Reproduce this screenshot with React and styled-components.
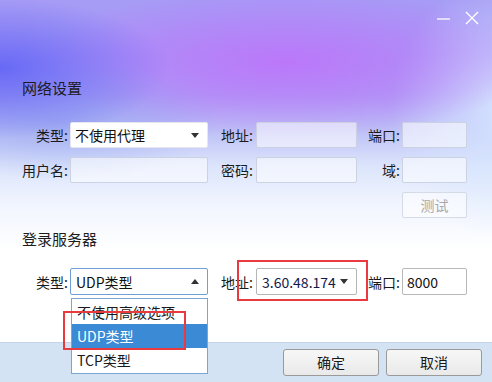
import React from "react";
import styled, { createGlobalStyle } from "styled-components";

const GlobalStyle = createGlobalStyle`
  html, body {
    margin: 0;
    padding: 0;
    background: #ffffff;
  }
  body {
    font-family: "Noto Sans CJK SC", "Noto Sans", sans-serif;
  }
`;

const Window = styled.div`
  position: relative;
  width: 492px;
  height: 382px;
  overflow: hidden;
  display: flex;
  flex-direction: column;
  color: #1a1a1a;
  font-size: 14px;
  background:
    radial-gradient(ellipse 170px 70px at 0px 68px, rgba(96, 100, 246, 0.9), rgba(96, 100, 246, 0)),
    radial-gradient(ellipse 160px 60px at 60px 120px, rgba(140, 160, 240, 0.6), rgba(140, 160, 240, 0)),
    radial-gradient(ellipse 250px 75px at 285px 62px, rgba(188, 118, 250, 0.95), rgba(188, 118, 250, 0)),
    radial-gradient(ellipse 110px 130px at 500px 110px, rgba(214, 230, 255, 0.95), rgba(214, 230, 255, 0)),
    linear-gradient(180deg, #a69cf5 0px, #a897f5 55px, #ae9ff5 95px, #bdbff6 130px, #dbe4fb 165px, #f1f5fe 205px, #ffffff 250px);
`;

const TitleBar = styled.div`
  height: 40px;
  display: flex;
  justify-content: flex-end;
  align-items: flex-start;
  gap: 12px;
  padding: 10px 12px 0 0;
  box-sizing: border-box;
`;

const WinButton = styled.div`
  width: 16px;
  height: 16px;
  display: flex;
  align-items: center;
  justify-content: center;
`;

const SectionTitle = styled.div`
  margin: ${(p) => p.$top}px 0 0 22px;
  font-size: 15px;
  line-height: 20px;
  color: #1c1c1c;
`;

const FormGrid = styled.div`
  display: grid;
  grid-template-columns: 70px 138px 48px 101px 45px 65px;
  grid-auto-rows: ${(p) => p.$rowHeight || 26}px;
  row-gap: 9px;
  margin-top: ${(p) => p.$top}px;
`;

const Label = styled.label`
  display: flex;
  align-items: center;
  justify-content: flex-end;
  padding-right: ${(p) => p.$pad ?? 2}px;
  font-size: 14px;
  white-space: nowrap;
  color: #1a1a1a;
`;

const Cell = styled.div`
  position: relative;
  grid-column: ${(p) => p.$col || "auto"};
`;

const Input = styled.div`
  box-sizing: border-box;
  width: 100%;
  height: 100%;
  display: flex;
  align-items: center;
  padding-left: 4px;
  border: 1px solid ${(p) => (p.$filled ? "#b8b8b8" : "rgba(200, 206, 222, 0.9)")};
  border-radius: 2px;
  background: ${(p) => (p.$filled ? "#ffffff" : "rgba(255, 255, 255, 0.55)")};
  font-size: 14px;
  color: #111;
`;

const Combo = styled.div`
  box-sizing: border-box;
  width: 100%;
  height: 100%;
  display: flex;
  align-items: center;
  justify-content: space-between;
  padding: 0 8px 0 ${(p) => p.$padLeft || 4}px;
  border: 1px solid ${(p) => (p.$focused ? "#6f9fd5" : p.$plain ? "#e6e6ee" : "#b5b5b5")};
  border-radius: 2px;
  background: #ffffff;
  font-size: 14px;
  color: ${(p) => p.$color || "#111"};
`;

const Arrow = styled.span`
  width: 0;
  height: 0;
  border-left: 4.5px solid transparent;
  border-right: 4.5px solid transparent;
  ${(p) => (p.$up ? "border-bottom: 5px solid #333;" : "border-top: 5px solid #333;")}
`;

const GhostButton = styled.div`
  box-sizing: border-box;
  height: 100%;
  display: flex;
  align-items: center;
  justify-content: center;
  border: 1px solid #d5dbe6;
  border-radius: 2px;
  background: rgba(255, 255, 255, 0.5);
  color: #a9a9a9;
  font-size: 14px;
`;

const DropList = styled.div`
  position: absolute;
  top: 30px;
  left: 1px;
  width: 137px;
  box-sizing: border-box;
  border: 1px solid #7aa6d6;
  background: #ffffff;
  z-index: 3;
  padding: 1px 0;
`;

const DropItem = styled.div`
  height: 24px;
  display: flex;
  align-items: center;
  padding-left: 5px;
  font-size: 14px;
  color: ${(p) => (p.$active ? "#ffffff" : "#1a1a1a")};
  background: ${(p) => (p.$active ? "#3b8ad5" : "transparent")};
`;

const Highlight = styled.div`
  position: absolute;
  top: ${(p) => p.$top}px;
  left: ${(p) => p.$left}px;
  width: ${(p) => p.$w}px;
  height: ${(p) => p.$h}px;
  box-sizing: border-box;
  border: 2px solid #e83a3f;
  pointer-events: none;
  z-index: 5;
`;

const Footer = styled.div`
  margin-top: auto;
  height: 40px;
  box-sizing: border-box;
  display: flex;
  justify-content: flex-end;
  align-items: center;
  gap: 7px;
  padding: 0 10px 1px 0;
  background: #d3e3f3;
  border-top: 1px solid #c3d5ea;
`;

const Button = styled.button`
  width: 96px;
  height: 27px;
  box-sizing: border-box;
  border: 1px solid #9a9a9a;
  border-radius: 3px;
  background: linear-gradient(180deg, #f7f7f7, #e9e9e9);
  font-family: inherit;
  font-size: 14px;
  color: #1a1a1a;
  padding: 0;
`;

function App() {
  return (
    <>
      <GlobalStyle />
      <Window>
        <TitleBar>
          <WinButton>
            <svg width="14" height="14" viewBox="0 0 14 14">
              <line x1="0" y1="8" x2="13" y2="8" stroke="#ffffff" strokeWidth="1.3" />
            </svg>
          </WinButton>
          <WinButton>
            <svg width="14" height="14" viewBox="0 0 14 14">
              <path d="M1 1 L13 13 M13 1 L1 13" stroke="#ffffff" strokeWidth="1.4" />
            </svg>
          </WinButton>
        </TitleBar>

        <SectionTitle $top={38}>网络设置</SectionTitle>
        <FormGrid $top={24}>
          <Label>类型:</Label>
          <Cell>
            <Combo $plain>
              <span>不使用代理</span>
              <Arrow />
            </Combo>
          </Cell>
          <Label $pad={3}>地址:</Label>
          <Cell><Input /></Cell>
          <Label>端口:</Label>
          <Cell><Input /></Cell>

          <Label>用户名:</Label>
          <Cell><Input /></Cell>
          <Label $pad={3}>密码:</Label>
          <Cell><Input /></Cell>
          <Label>域:</Label>
          <Cell><Input /></Cell>

          <Cell $col="6">
            <GhostButton>测试</GhostButton>
          </Cell>
        </FormGrid>

        <SectionTitle $top={11}>登录服务器</SectionTitle>
        <FormGrid $top={19} $rowHeight={27}>
          <Label>类型:</Label>
          <Cell>
            <Combo $focused $padLeft={5}>
              <span>UDP类型</span>
              <Arrow $up />
            </Combo>
            <DropList>
              <DropItem>不使用高级选项</DropItem>
              <DropItem $active>UDP类型</DropItem>
              <DropItem>TCP类型</DropItem>
            </DropList>
            <Highlight $top={43} $left={-7} $w={123} $h={39} />
          </Cell>
          <Label $pad={3}>地址:</Label>
          <Cell>
            <Combo $padLeft={5} $color="#14184a">
              <span>3.60.48.174</span>
              <Arrow />
            </Combo>
            <Highlight $top={-8} $left={-19} $w={131} $h={41} />
          </Cell>
          <Label>端口:</Label>
          <Cell>
            <Input $filled>8000</Input>
          </Cell>
        </FormGrid>

        <Footer>
          <Button>确定</Button>
          <Button>取消</Button>
        </Footer>
      </Window>
    </>
  );
}

export default App;
